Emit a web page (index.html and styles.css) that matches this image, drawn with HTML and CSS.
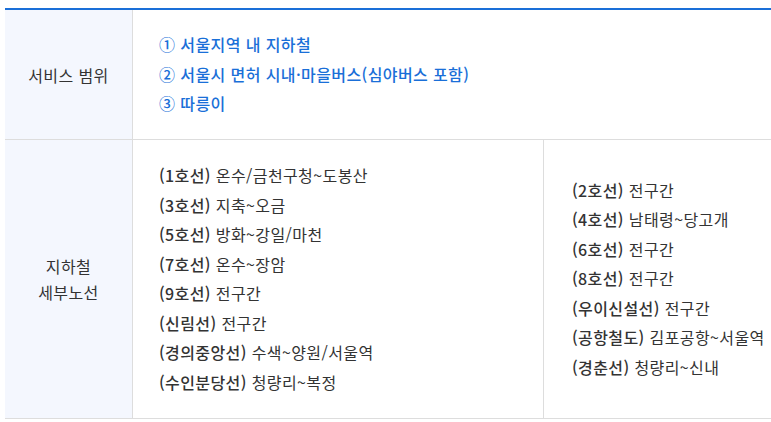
FILE: index.html
```html
<!DOCTYPE html>
<html lang="ko">
<head>
<meta charset="utf-8">
<link rel="stylesheet" href="styles.css">
</head>
<body>
<div class="wrap">
  <div class="info-table">
    <div class="row">
      <div class="th">서비스 범위</div>
      <div class="td td-blue">
        <p>① 서울지역 내 지하철</p>
        <p>② 서울시 면허 시내·마을버스(심야버스 포함)</p>
        <p>③ 따릉이</p>
      </div>
    </div>
    <div class="row">
      <div class="th">지하철<br>세부노선</div>
      <div class="td td-split">
        <div class="col col-left">
          <p><b>(1호선)</b> 온수/금천구청~도봉산</p>
          <p><b>(3호선)</b> 지축~오금</p>
          <p><b>(5호선)</b> 방화~강일/마천</p>
          <p><b>(7호선)</b> 온수~장암</p>
          <p><b>(9호선)</b> 전구간</p>
          <p><b>(신림선)</b> 전구간</p>
          <p><b>(경의중앙선)</b> 수색~양원/서울역</p>
          <p><b>(수인분당선)</b> 청량리~복정</p>
        </div>
        <div class="col col-right">
          <p><b>(2호선)</b> 전구간</p>
          <p><b>(4호선)</b> 남태령~당고개</p>
          <p><b>(6호선)</b> 전구간</p>
          <p><b>(8호선)</b> 전구간</p>
          <p><b>(우이신설선)</b> 전구간</p>
          <p><b>(공항철도)</b> 김포공항~서울역</p>
          <p><b>(경춘선)</b> 청량리~신내</p>
        </div>
      </div>
    </div>
  </div>
</div>
</body>
</html>
```
FILE: styles.css
```css
html, body {
  margin: 0;
  padding: 0;
  overflow: hidden;
  background: #fff;
}
body {
  font-family: "Noto Sans CJK KR", "Noto Sans", sans-serif;
  font-size: 16px;
  letter-spacing: 0.4px;
  color: #333;
}
.wrap {
  padding: 8px 0 0 5px;
}
.info-table {
  width: 766px;
  border-top: 2px solid #1a6fd8;
}
.row {
  display: grid;
  grid-template-columns: 128px 1fr;
  border-bottom: 1px solid #dddddd;
}
.th {
  background: #f4f7fe;
  border-right: 1px solid #dddddd;
  display: flex;
  align-items: center;
  justify-content: center;
  text-align: center;
  line-height: 26px;
  color: #333;
}
.td p {
  margin: 0;
  line-height: 29.5px;
  white-space: nowrap;
}
.td b {
  font-weight: 500;
}
.td-blue {
  padding: 20px 26px 20.5px;
  color: #1a6fd8;
  font-weight: 500;
}
.td-split {
  display: grid;
  grid-template-columns: 411px 1fr;
}
.col {
  padding: 21px 26px;
  display: flex;
  flex-direction: column;
  justify-content: center;
}
.col-left {
  border-right: 1px solid #dddddd;
}
.col-right {
  padding: 21px 0 21px 28px;
}
```
